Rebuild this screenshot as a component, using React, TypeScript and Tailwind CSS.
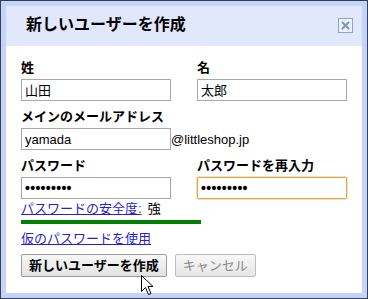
const JP = "font-['Liberation_Sans','Noto_Sans_CJK_JP',sans-serif]";

function CloseBox() {
	return (
		<svg width="15" height="15" viewBox="0 0 15 15" className="block">
			<rect x="0.5" y="0.5" width="14" height="14" fill="#eef2fc" stroke="#8ea4c6" />
			<path d="M4 4 L11 11 M11 4 L4 11" stroke="#7d95bb" strokeWidth="2" />
		</svg>
	);
}

function Cursor() {
	return (
		<svg
			width="13"
			height="21"
			viewBox="0 0 13 21"
			className="absolute left-[140px] top-[274px]"
		>
			<path
				d="M0.5 0.5 L0.5 16.5 L4.5 12.5 L7.5 19.5 L10 18.5 L7 11.5 L12 11.5 Z"
				fill="#fff"
				stroke="#000"
				strokeWidth="1"
				strokeLinejoin="miter"
			/>
		</svg>
	);
}

function Field({
	label,
	value,
	password,
	focused,
}: {
	label: string;
	value: string;
	password?: boolean;
	focused?: boolean;
}) {
	return (
		<div className="flex flex-col">
			<div className="text-[13px] leading-[16px] font-bold text-black">{label}</div>
			<div
				className={
					focused
						? 'mt-[3px] h-[22px] w-[150px] border border-[#dea448] rounded-[2px] shadow-[0_0_0_1px_#f6e2bd] bg-white px-[3px] flex items-center text-[13px] leading-none'
						: 'mt-[3px] h-[22px] w-[150px] border border-[#a9a9a9] bg-white px-[3px] flex items-center text-[13px] leading-none'
				}
			>
				{password ? (
					<span className="text-[14px] font-bold tracking-[0.3px]">•••••••••</span>
				) : (
					value
				)}
			</div>
		</div>
	);
}

export default function App() {
	return (
		<div
			className={`${JP} relative w-[368px] h-[299px] border border-[#3a3f4c] bg-[#c4d3fb] p-[5px] flex flex-col text-black`}
		>
			<div className="h-[40px] bg-[#e1e8fd] flex items-center justify-between pl-[20px] pr-[9px]">
				<div className="text-[16px] font-bold leading-[20px] -mt-[2px]">新しいユーザーを作成</div>
				<div className="-mt-[1px]">
					<CloseBox />
				</div>
			</div>
			<div className="flex-1 bg-white pt-[14px] px-[15px]">
				<div className="grid grid-cols-[150px_150px] gap-x-[26px]">
					<Field label="姓" value="山田" />
					<Field label="名" value="太郎" />
				</div>
				<div className="mt-[8px] flex flex-col">
					<div className="text-[13px] leading-[16px] font-bold">メインのメールアドレス</div>
					<div className="mt-[3px] flex items-center">
						<div className="h-[22px] w-[150px] border border-[#a9a9a9] px-[3px] flex items-center text-[13px] leading-none">
							yamada
						</div>
						<span className="text-[13px] leading-none">@littleshop.jp</span>
					</div>
				</div>
				<div className="mt-[8px] grid grid-cols-[150px_150px] gap-x-[26px]">
					<Field label="パスワード" value="" password />
					<Field label="パスワードを再入力" value="" password focused />
				</div>
				<div className="mt-[2px] text-[13px] leading-[16px] flex gap-[6px]">
					<a className="text-[#2a1fd0] underline">パスワードの安全度:</a>
					<span>強</span>
				</div>
				<div className="mt-[3px] h-[4px] w-[180px] bg-[#008000]" />
				<div className="mt-[7px] text-[13px] leading-[16px]">
					<a className="text-[#2a1fd0] underline">仮のパスワードを使用</a>
				</div>
				<div className="mt-[7px] flex gap-[8px]">
					<button className="h-[23px] px-[7px] border border-[#9a9a9a] rounded-[2px] bg-gradient-to-b from-[#f8f8f8] to-[#e2e2e2] text-[13px] font-bold leading-none">
						新しいユーザーを作成
					</button>
					<button className="h-[23px] w-[81px] border border-[#bdbdbd] rounded-[2px] bg-gradient-to-b from-[#f8f8f8] to-[#e6e6e6] text-[13px] text-[#8a8a8a] leading-none">
						キャンセル
					</button>
				</div>
			</div>
			<Cursor />
		</div>
	);
}
